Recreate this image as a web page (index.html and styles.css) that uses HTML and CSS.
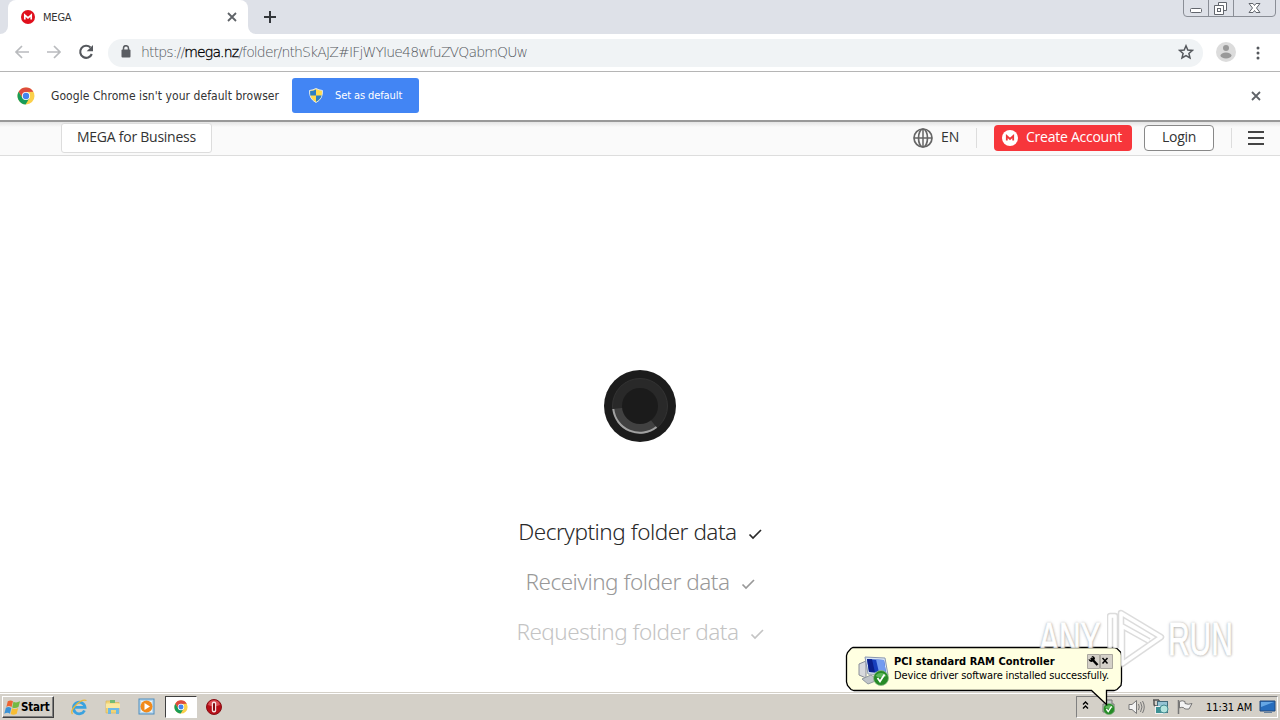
FILE: index.html
```html
<!DOCTYPE html>
<html lang="en">
<head>
<meta charset="utf-8">
<title>MEGA</title>
<link rel="stylesheet" href="styles.css">
</head>
<body>
<svg class="defs" width="0" height="0">
  <defs>
    <symbol id="chrome" viewBox="0 0 18 18">
      <circle cx="9" cy="9" r="8.5" fill="#fbd04b"/>
      <path d="M1.6 4.8A8.5 8.5 0 0 1 16.4 4.8L9 5L5.5 11Z" fill="#dd4b3e"/>
      <path d="M1.6 4.8A8.5 8.5 0 0 0 8.6 17.5L12.5 11L5.5 11Z" fill="#189c58"/>
      <circle cx="9" cy="9" r="4.1" fill="#fff"/>
      <circle cx="9" cy="9" r="3.2" fill="#4484ee"/>
    </symbol>
    <symbol id="cross" viewBox="0 0 10 10"><path d="M1 1L9 9M9 1L1 9" stroke="#5f6368" stroke-width="1.8"/></symbol>
    <symbol id="tick" viewBox="0 0 14 12"><path d="M1.500 6.500L5 10L13 2" fill="none" stroke="currentColor" stroke-width="1.7"/></symbol>
    <symbol id="okay" viewBox="0 0 16 16">
      <circle cx="8" cy="8" r="7.5" fill="#268b26" stroke="#8ab88a" stroke-width=".8"/>
      <path d="M2.5 6A6 5 0 0 1 13.5 6Q8 9 2.5 6" fill="#5cb85c"/>
      <path d="M4.5 8L7 11.5L11.5 4.5" fill="none" stroke="#fff" stroke-width="1.8"/>
    </symbol>
  </defs>
</svg>
<div class="screen">
  <div class="tabstrip">
    <i class="prev-tab"></i>
    <div class="tab">
      <svg class="tab-icon" viewBox="0 0 14 14"><circle cx="7" cy="7" r="7" fill="#e00f1c"/><path d="M3.8 9.500V5L7 7.800L10.200 5V9.500" fill="none" stroke="#fff" stroke-width="1.7"/></svg>
      <span class="tab-title">MEGA</span>
      <svg class="tab-close"><use href="#cross"/></svg>
    </div>
    <svg class="newtab" viewBox="0 0 12 12"><path d="M6 0V12M0 6H12" stroke="#33363b" stroke-width="2"/></svg>
    <svg class="winbtns" viewBox="0 0 94 18">
      <path d="M.5 0V13Q.5 16.500 4 16.500H89Q92.500 16.500 92.500 13V0M25.500 0V16M50.500 0V16" fill="none" stroke="#8a8e96"/>
      <g fill="#fff" stroke="#62666d"><rect x="7.500" y="8.500" width="11" height="4" rx="1"/><path d="M35.500 2.500H43.500V10.500H35.500Z"/><path d="M31.500 5.500H40.500V14.500H31.500Z"/><rect x="34.500" y="8.500" width="3" height="3"/>
      <path d="M66 3.500H70L71.500 5.500L73 3.500H77L73.500 8L77 12.500H73L71.500 10.500L70 12.500H66L69.500 8Z"/></g>
    </svg>
  </div>
  <div class="toolbar">
    <svg class="nav" viewBox="0 0 96 20">
      <path d="M17 9H4M10 3L4 9L10 15M35 9H48M42 3L48 9L42 15" fill="none" stroke="#b9bbbe" stroke-width="1.7"/>
      <path d="M78.500 4.600A6 6 0 1 0 79.800 11" fill="none" stroke="#55585d" stroke-width="2.100"/><path d="M81 2V8.300H74.700Z" fill="#55585d"/>
    </svg>
    <div class="omnibox">
      <svg class="lock" viewBox="0 0 10 13"><rect x=".5" y="4.500" width="9" height="8" rx="1" fill="#5a5d62"/><path d="M2.500 5V3.200A2.500 2.500 0 0 1 7.500 3.200V5" fill="none" stroke="#5a5d62" stroke-width="1.500"/></svg>
      <div class="url">https://<span class="host">mega.nz</span>/folder/nthSkAJZ#IFjWYIue48wfuZVQabmQUw</div>
      <svg class="star" viewBox="0 0 16 16"><path d="M8 1.800L9.800 6L14.400 6.400L10.900 9.400L12 13.900L8 11.500L4 13.900L5.100 9.400L1.600 6.400L6.200 6Z" fill="none" stroke="#55585d" stroke-width="1.500"/></svg>
    </div>
    <svg class="avatar" viewBox="0 0 20 20"><circle cx="10" cy="10" r="10" fill="#dcdcdc"/><circle cx="10" cy="6" r="3" fill="#999"/><ellipse cx="10" cy="13.500" rx="5.500" ry="3" fill="#999"/></svg>
    <svg class="dots" viewBox="0 0 4 14"><g fill="#55585d"><circle cx="2" cy="2" r="1.500"/><circle cx="2" cy="7" r="1.500"/><circle cx="2" cy="12" r="1.500"/></g></svg>
  </div>
  <div class="infobar">
    <svg class="chrome-icon"><use href="#chrome"/></svg>
    <span class="info-text">Google Chrome isn't your default browser</span>
    <div class="default-btn">
      <svg class="shield" viewBox="0 0 14 15"><path d="M7 .5Q10 2 13.500 2.500Q14 11 7 14.500Q0 11 .5 2.500Q4 2 7 .5Z" fill="#ffdb4d" stroke="#dce6ee"/><path d="M7 1.500V7.500H1.300Q1 4 1.200 3Q4 3 7 1.500M7 7.500H12.600Q11.500 11.500 7 13.800Z" fill="#2b7fc4"/></svg>
      <span class="default-text">Set as default</span>
    </div>
    <svg class="info-close"><use href="#cross"/></svg>
  </div>
  <div class="site-header">
    <div class="business"><span class="business-text">MEGA for Business</span></div>
    <svg class="globe" viewBox="0 0 20 20"><g fill="none" stroke="#666" stroke-width="1.700"><circle cx="10" cy="10" r="9"/><ellipse cx="10" cy="10" rx="4.500" ry="9"/><path d="M1 10H19M10 1V19" stroke-width="1.500"/></g></svg>
    <span class="lang">EN</span>
    <i class="divider"></i>
    <div class="create">
      <svg class="create-icon" viewBox="0 0 16 16"><circle cx="8" cy="8" r="8" fill="#fff"/><path d="M4.800 10.500V6L8 9L11.200 6V10.500" fill="none" stroke="#f0373a" stroke-width="1.800"/></svg>
      <span class="create-text">Create Account</span>
    </div>
    <div class="login"><span class="login-text">Login</span></div>
    <i class="divider second"></i>
    <svg class="burger" viewBox="0 0 16 14"><path d="M0 1H16M0 7H16M0 13H16" stroke="#444" stroke-width="2"/></svg>
  </div>
  <div class="page">
    <svg class="spinner" viewBox="0 0 72 72">
      <circle cx="36" cy="36" r="36" fill="#1c1c1c"/>
      <circle cx="36" cy="36" r="27.500" fill="#292929" stroke="#333"/>
      <path d="M36 36L8.500 39A27.700 27.700 0 0 0 53 58Z" fill="#414141"/>
      <path d="M9.300 39A26.800 26.800 0 0 0 52.500 57" fill="none" stroke="#a2a2a2" stroke-width="2"/>
      <circle cx="36" cy="36" r="18" fill="#1b1b1b"/>
    </svg>
    <div class="steps">
      <div class="step s1"><span class="t1">Decrypting folder data</span><svg class="tick"><use href="#tick"/></svg></div>
      <div class="step s2"><span class="t2">Receiving folder data</span><svg class="tick"><use href="#tick"/></svg></div>
      <div class="step s3"><span class="t3">Requesting folder data</span><svg class="tick"><use href="#tick"/></svg></div>
    </div>
  </div>
  <div class="taskbar">
    <div class="start">
      <svg class="flag-logo" viewBox="0 0 18 17"><path d="M4 2Q7 0 9.500 2L8 8Q5 6 2.500 8Z" fill="#ed6432"/><path d="M10 2.500Q13 4 17 2L15.300 8Q12 10 8.700 8.500Z" fill="#74b943"/><path d="M2 8.700Q5 7 7.700 9L6.300 15Q4 13 .3 15Z" fill="#3a92d6"/><path d="M8.500 9.300Q12 11 15 9L13.500 15Q10 17 7 15.300Z" fill="#f8bd32"/></svg>
      <span class="start-text">Start</span>
    </div>
    <svg class="task-icon ie" viewBox="0 0 18 18"><path d="M14.500 12.500A5.800 5.800 0 1 1 15 9.300H5" fill="none" stroke="#3aa2df" stroke-width="2.800"/><path d="M2.500 16Q0 13 6 7T16.500 2.500" fill="none" stroke="#e9b83a" stroke-width="1.300"/></svg>
    <svg class="task-icon folder" viewBox="0 0 18 18"><path d="M2 3H7L8 4.500H15V15H2Z" fill="#f0d477" stroke="#d8b45c" stroke-width=".7"/><path d="M6 2H11V5H6Z" fill="#72bb73"/><path d="M2 5.500H16V10H2Z" fill="#fae89f"/><path d="M4 16V10H15V16H12V12H7V16Z" fill="#6db9e5"/></svg>
    <svg class="task-icon media" viewBox="0 0 18 18"><rect x="1" y="1" width="15" height="15" fill="#b9d8ee" stroke="#4e8dbd"/><rect x="3" y="3" width="11" height="11" fill="#e9f4fa"/><circle cx="8.500" cy="8.500" r="6" fill="#f18a1b"/><path d="M6.500 5L12 8.500L6.500 12Z" fill="#fff"/></svg>
    <div class="active-task"><svg class="chrome-task" viewBox="0 0 18 18"><use href="#chrome" width="18" height="18"/></svg></div>
    <svg class="opera" viewBox="0 0 16 16"><circle cx="8" cy="8" r="7.500" fill="#b70f18" stroke="#861016"/><path d="M2 6A6.200 6.200 0 0 1 14 6L8 8Z" fill="#dc5055"/><rect x="5.800" y="2.500" width="4.400" height="11" rx="2" fill="#f7e6e6"/><rect x="7" y="4" width="2" height="8" rx="1" fill="#850d12"/></svg>
    <div class="tray">
      <svg class="tray-icons" viewBox="0 0 120 20">
        <path d="M6 7.500L8.500 5L11 7.500M6 11.500L8.500 9L11 11.500" fill="none" stroke="#000" stroke-width="1.400"/>
        <path d="M29 3H35V7H37V15H26V7H29Z" fill="#c5c8c8" stroke="#777"/>
        <use href="#okay" x="26" y="6" width="12" height="12"/>
        <path d="M52 7.500H55L59.500 3.500V16.500L55 12.500H52Z" fill="#f3f3f3" stroke="#777"/><path d="M61.500 7Q63 10 61.500 13M63.500 5Q66.500 10 63.500 15M65.500 4Q69 10 65.500 16" fill="none" stroke="#777"/>
        <path d="M77 3V7Q77 9 79 9H81M76 3H82M82 3V8" fill="none" stroke="#555" stroke-width="1.500"/><rect x="80.500" y="4.500" width="10" height="11" fill="#94c3d4" stroke="#426a7a"/><rect x="78.500" y="9.500" width="9" height="7" fill="#3c9194" stroke="#eee"/><circle cx="87" cy="12" r="4" fill="#b3e4dd" stroke="#438b92"/>
        <path d="M101.500 3V17" stroke="#777" stroke-width="1.500"/><path d="M102.500 4.500Q105 3 108 4.500V6.500Q111 8 115 6.500L112 12Q107 12.500 106.500 10.500Q104 10 102.500 11Z" fill="#f3f3f3" stroke="#777"/>
      </svg>
      <span class="clock">11:31 AM</span>
      <svg class="monitor" viewBox="0 0 18 14"><path d="M1 1H16V11H1Z" fill="#276dbd" stroke="#244a7d"/><path d="M2 2H15L2 7Z" fill="#65a6e5"/><path d="M5 12H13V13H5Z" fill="#69829d"/></svg>
    </div>
  </div>
  <div class="balloon">
    <svg class="balloon-shape" viewBox="0 0 278 64"><path d="M8 1.500H269L272 2.500L276 6.500L276.500 9.500V35.500L276 39.500L272 43.500L269 44.500H261.500V58.500L246.500 44.500H9L6 43.500L2.500 39.500L1.500 36V9.500L2.500 6.500L6 2.500Z" fill="#ffffe1" stroke="#000" stroke-width="1.300"/></svg>
    <svg class="device" viewBox="0 0 32 32">
      <path d="M1 9L8 6V23L1 20Z" fill="#d8dadd" stroke="#8a8e99"/><path d="M4 24L13 20L20 25L10 29Z" fill="#bfc4c9" stroke="#919aa0"/><path d="M7 2L27 3L30 20L10 19Z" fill="#d9e6f5" stroke="#8996b0"/><path d="M9 4L26 5L28 18L11 17Z" fill="#173fbd"/><path d="M18 4.500L26 5L28 18L21 17.500Z" fill="#729bf0"/><path d="M9 4L14 4.300L17 17.400L11 17Z" fill="#0a1f8b"/>
      <use href="#okay" x="15" y="15" width="16" height="16"/>
    </svg>
    <div class="message">
      <div class="message-title">PCI standard RAM Controller</div>
      <div class="message-body">Device driver software installed successfully.</div>
    </div>
    <svg class="tools" viewBox="0 0 26 15"><path d="M.5 .5H12.500V14.500H.5ZM13.500 .5H25.500V14.500H13.500Z" fill="#d4d0c8" stroke="#aaa79f"/><path d="M4 4L10.500 11" stroke="#000" stroke-width="2.500"/><path d="M1.500 5L4 6L6 4L4.500 2Q8 2 8 5L5 8Q2 8 1.500 5Z"/><path d="M15.500 4L20.500 9.500M20.500 4L15.500 9.500" stroke="#000" stroke-width="1.500"/></svg>
  </div>
  <div class="watermark">
    <span class="any">ANY</span>
    <svg class="play" viewBox="0 0 58 62"><g fill="none" stroke-linejoin="round"><path d="M3 50V8H8V50ZM14 57V5L54 29L15 56V18L42 33" stroke="#c0c0c0" stroke-width="6.500" opacity=".65"/><path d="M3 50V8H8V50ZM14 57V5L54 29L15 56V18L42 33" stroke="#fff" stroke-width="3.500"/></g></svg>
    <span class="run">RUN</span>
  </div>
</div>
</body>
</html>
```
FILE: styles.css
```css
* { box-sizing: border-box; }
body { margin: 0; }
svg { display: block; flex: none; }
.defs { position: absolute; }
span, .url, .message-title, .message-body { white-space: nowrap; }
.screen { position: relative; display: flex; flex-direction: column; width: 1280px; height: 720px; overflow: hidden; background: #fff; font-family: "DejaVu Sans Condensed", "DejaVu Sans", sans-serif; color: #333; }
.tabstrip { flex: none; display: flex; height: 34px; background: linear-gradient(#fff, #fff) 0 100% / 256px 8px no-repeat #dee1e8; }
.prev-tab { width: 8px; height: 34px; border-radius: 0 0 8px 0; background: #dee1e8; }
.tab { display: flex; align-items: center; width: 240px; padding: 0 11px 0 13px; border-radius: 8px 8px 0 0; background: #fff; }
.tab-icon { width: 14px; height: 14px; }
.tab-title { margin-left: 8px; font-size: 11px; letter-spacing: -.2px; }
.tab-close { width: 10px; height: 10px; margin-left: auto; }
.newtab { box-sizing: content-box; width: 12px; height: 12px; padding: 11px 0 11px 16px; border-radius: 0 0 0 8px; background: #dee1e8; }
.winbtns { width: 94px; height: 18px; margin-left: auto; margin-right: 3px; }
.toolbar { flex: none; display: flex; align-items: center; height: 38px; padding-left: 12px; border-bottom: 1px solid #b5b5b5; }
.nav { width: 96px; height: 20px; }
.omnibox { display: flex; align-items: center; width: 1095px; height: 28px; padding: 0 9px 0 13px; border-radius: 14px; background: #f0f3f5; }
.lock { width: 10px; height: 13px; margin-top: -2px; }
.url { margin: -2px 0 0 10px; font-family: "DejaVu Sans", sans-serif; font-weight: 200; font-size: 14px; letter-spacing: -.86px; color: #54585d; }
.host { color: #000; -webkit-text-stroke: .3px #000; }
.star { width: 16px; height: 16px; margin: -2px 0 0 auto; }
.avatar { width: 20px; height: 20px; margin: -2px 0 0 13px; }
.dots { width: 4px; height: 14px; margin-left: 20px; }
.infobar { flex: none; display: flex; align-items: center; height: 50px; padding: 0 19px 1px 17px; border-bottom: 2px solid #999; }
.chrome-icon { width: 18px; height: 18px; }
.info-text { width: 241px; margin-left: 16px; font-size: 12px; letter-spacing: .06px; }
.default-btn { display: flex; align-items: center; width: 127px; height: 35px; padding-left: 17px; border-radius: 3px; background: #4285f4; color: #fff; }
.shield { width: 14px; height: 15px; }
.default-text { margin-left: 12px; font-size: 11px; letter-spacing: -.1px; }
.info-close { width: 10px; height: 10px; margin-left: auto; }
.site-header { flex: none; display: flex; align-items: center; height: 34px; padding: 0 16px 2px 61px; border-bottom: 1px solid #ddd; background: linear-gradient(#e4e4e4, #fafafa 5px); font-family: "Open Sans", "Noto Sans", sans-serif; font-size: 14px; }
.business { width: 151px; height: 30px; padding: 3px 0 0 15px; border: 1px solid #ddd; border-radius: 3px; background: #fff; line-height: 20px; letter-spacing: -.25px; }
.globe { width: 20px; height: 20px; margin-left: 701px; }
.lang { margin: -2px 0 0 8px; width: 35px; }
.divider { width: 1px; height: 20px; background: #ddd; }
.create { display: flex; align-items: center; width: 138px; height: 26px; margin-left: 17px; padding-left: 8px; border-radius: 4px; background: #f7363b; color: #fff; }
.create-icon { width: 16px; height: 16px; }
.create-text { margin: -2px 0 0 8px; letter-spacing: -.25px; }
.login { width: 70px; height: 26px; margin-left: 12px; border: 1px solid #888; border-radius: 4px; background: #fff; text-align: center; line-height: 22px; letter-spacing: -.3px; }
.second { margin-left: 17px; }
.burger { width: 16px; height: 14px; margin-left: auto; margin-right: 0; }
.page { flex: 1; display: flex; flex-direction: column; align-items: center; padding-top: 214px; }
.spinner { width: 72px; height: 72px; }
.steps { margin-top: 64px; font-family: "Noto Sans", "Open Sans", sans-serif; font-weight: 300; font-size: 22.5px; letter-spacing: -.48px; }
.step { display: flex; align-items: center; justify-content: center; height: 50px; padding-top: 1px; }
.s1 { color: #292929; } .s2 { color: #999; } .s3 { color: #c4c4c4; }
.tick { width: 14px; height: 12px; margin: 4px 0 0 11px; }
.taskbar { flex: none; display: flex; align-items: center; height: 28px; padding: 1px 0 0 2px; border-top: 1px solid #d4d0c8; background: #d4d0c8; box-shadow: inset 0 1px #fff; color: #000; }
.start { display: flex; align-items: center; width: 52px; height: 22px; padding-left: 1px; border: 1px solid; border-color: #fff #404040 #404040 #fff; box-shadow: inset -1px -1px #808080; }
.flag-logo { width: 17px; height: 17px; }
.start-text { font-size: 11.5px; font-weight: 700; letter-spacing: -.2px; }
.task-icon { width: 18px; height: 18px; }
.ie { margin-left: 16px; }
.folder { margin-left: 16px; }
.media { margin-left: 16px; }
.active-task { display: flex; align-items: center; justify-content: center; width: 32px; height: 22px; margin-left: 9px; border: 1px solid; border-color: #404040 #fff #fff #404040; background: #fff; }
.chrome-task { width: 14px; height: 14px; }
.opera { width: 16px; height: 16px; margin-left: 9px; }
.tray { display: flex; align-items: center; width: 202px; height: 22px; margin-left: auto; margin-right: 2px; border: 1px solid; border-color: #808080 #fff #fff #808080; }
.tray-icons { width: 120px; height: 20px; }
.clock { width: 47px; margin-left: 9px; font-size: 11px; letter-spacing: -.1px; }
.monitor { width: 18px; height: 14px; margin-left: 6px; }
.balloon { position: absolute; left: 845px; top: 646px; display: flex; width: 278px; height: 64px; padding: 9px 11px 0 13px; color: #000; }
.balloon-shape { position: absolute; left: 0; top: 0; width: 278px; height: 64px; }
.device { position: relative; width: 32px; height: 32px; }
.message { position: relative; margin-left: 4px; font-size: 11px; line-height: 14px; }
.message-title { font-weight: 700; letter-spacing: .04px; }
.message-body { letter-spacing: -.14px; }
.tools { position: absolute; left: 242px; top: 8px; width: 26px; height: 15px; }
.watermark { position: absolute; left: 1039px; top: 608px; display: flex; align-items: center; width: 195px; height: 62px; opacity: .85; font: 400 46px/68px "Liberation Sans", sans-serif; color: #fff; -webkit-text-stroke: 1px #fff; text-shadow: 0 0 2px #999, 0 0 4px #aaa, 1px 1px 3px #bbb; clip-path: polygon(0 0, 100% 0, 100% 100%, 82px 100%, 82px 40px, 0 40px); }
.any, .run { display: block; width: 68px; transform: scaleX(.65); transform-origin: left; }
.run { margin-left: 3px; }
.play { width: 58px; height: 62px; }
```
